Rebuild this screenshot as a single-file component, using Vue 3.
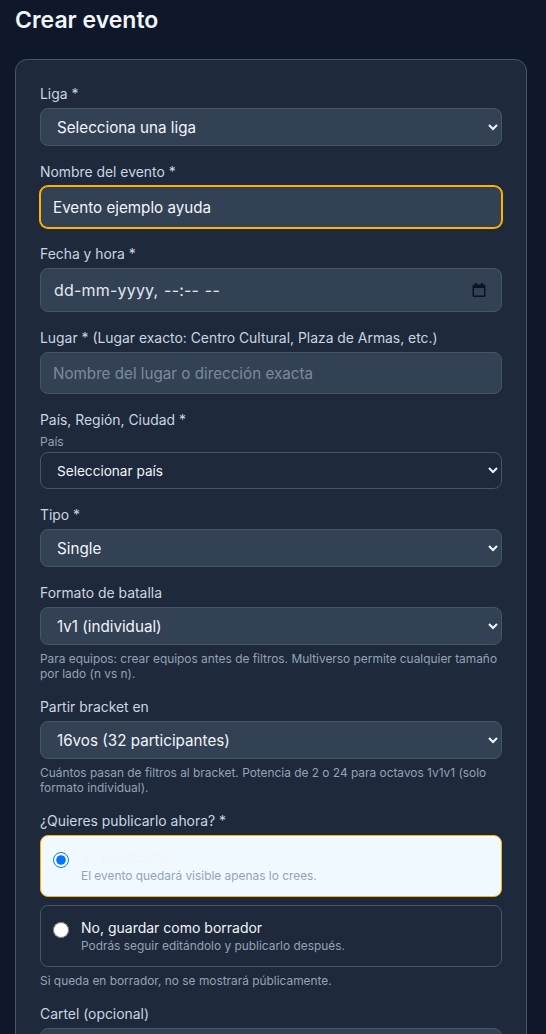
<template>
  <div class="page">
    <h1 class="page-title">Crear evento</h1>
    <form class="event-form" @submit.prevent>
      <div class="form-group">
        <label class="form-label">Liga *</label>
        <select class="form-select">
          <option>Selecciona una liga</option>
        </select>
      </div>

      <div class="form-group">
        <label class="form-label">Nombre del evento *</label>
        <input class="form-input focused" type="text" value="Evento ejemplo ayuda" />
      </div>

      <div class="form-group">
        <label class="form-label">Fecha y hora *</label>
        <div class="date-field">
          <input class="date-text" type="text" value="dd-mm-yyyy, --:-- --" />
          <svg class="date-icon" width="16" height="16" viewBox="0 0 16 16">
            <path d="M4 1h2v1.5h4V1h2v1.5h1.2c.7 0 1.3.6 1.3 1.3v9.9c0 .7-.6 1.3-1.3 1.3H2.8c-.7 0-1.3-.6-1.3-1.3V3.8c0-.7.6-1.3 1.3-1.3H4V1zm-1 5v7.5h10V6H3z" fill="#0b1220" />
          </svg>
        </div>
      </div>

      <div class="form-group">
        <label class="form-label">Lugar * (Lugar exacto: Centro Cultural, Plaza de Armas, etc.)</label>
        <input class="form-input" type="text" placeholder="Nombre del lugar o dirección exacta" />
      </div>

      <div class="form-group">
        <label class="form-label">País, Región, Ciudad *</label>
        <label class="sub-label">País</label>
        <select class="form-select small-select">
          <option>Seleccionar país</option>
        </select>
      </div>

      <div class="form-group">
        <label class="form-label">Tipo *</label>
        <select class="form-select">
          <option>Single</option>
        </select>
      </div>

      <div class="form-group">
        <label class="form-label">Formato de batalla</label>
        <select class="form-select">
          <option>1v1 (individual)</option>
        </select>
        <p class="form-help">Para equipos: crear equipos antes de filtros. Multiverso permite cualquier tamaño por lado (n vs n).</p>
      </div>

      <div class="form-group">
        <label class="form-label">Partir bracket en</label>
        <select class="form-select">
          <option>16vos (32 participantes)</option>
        </select>
        <p class="form-help">Cuántos pasan de filtros al bracket. Potencia de 2 o 24 para octavos 1v1v1 (solo formato individual).</p>
      </div>

      <div class="form-group">
        <label class="form-label">¿Quieres publicarlo ahora? *</label>
        <div class="publish-options">
          <label v-for="opt in publishOptions" :key="opt.value" class="publish-option" :class="{ active: publish === opt.value }">
            <input v-model="publish" class="publish-radio" type="radio" name="publish" :value="opt.value" />
            <span class="publish-text">
              <span class="publish-title">{{ opt.title }}</span>
              <span class="publish-desc">{{ opt.desc }}</span>
            </span>
          </label>
        </div>
        <p class="form-help">Si queda en borrador, no se mostrará públicamente.</p>
      </div>

      <div class="form-group">
        <label class="form-label">Cartel (opcional)</label>
        <input class="form-input" type="text" />
      </div>
    </form>
  </div>
</template>

<script setup>
import { ref } from 'vue'

const publish = ref('yes')

const publishOptions = [
  { value: 'yes', title: 'Sí, publicarlo', desc: 'El evento quedará visible apenas lo crees.' },
  { value: 'no', title: 'No, guardar como borrador', desc: 'Podrás seguir editándolo y publicarlo después.' }
]
</script>

<style scoped>
.page {
  height: 1034px;
  overflow: hidden;
  padding: 0 19px 0 15px;
  box-sizing: border-box;
  background: #0f172a;
  font-family: Inter, "Liberation Sans", sans-serif;
}

.page-title {
  margin: 0 0 24px;
  padding-top: 6px;
  color: #f1f5f9;
  font-size: 23px;
  line-height: 29px;
  font-weight: 600;
}

.event-form {
  padding: 24px;
  background: #1e293b;
  border: 1px solid #475569;
  border-radius: 12px;
}

.form-group {
  margin-bottom: 16px;
}

.form-label {
  display: block;
  margin-bottom: 3px;
  color: #cbd5e1;
  font-size: 13.9px;
  line-height: 21px;
  font-weight: 400;
}

.sub-label {
  display: block;
  margin: 0 0 3px;
  color: #94a3b8;
  font-size: 12px;
  line-height: 15px;
}

.form-select,
.form-input,
.date-field {
  display: block;
  width: 100%;
  box-sizing: border-box;
  background-color: #334155;
  border: 1px solid #475569;
  border-radius: 8px;
  color: #f1f5f9;
  font-family: inherit;
  font-size: 15.2px;
  outline: none;
}

.form-select {
  height: 38px;
  padding: 0 12px;
}

.small-select {
  height: 37px;
  background-color: #1e293b;
  font-size: 13.6px;
}

.form-input {
  height: 42px;
  padding: 0 12px;
}

.form-input::placeholder {
  color: #7c8a9e;
}

.focused {
  border-color: #ffb300;
  box-shadow: 0 0 0 1px #ffb300;
}

.date-field {
  display: flex;
  align-items: center;
  height: 44px;
  padding: 0 14px 0 13px;
}

.date-text {
  flex: 1;
  min-width: 0;
  padding: 0;
  border: none;
  outline: none;
  background: transparent;
  color: #e2e8f0;
  font: inherit;
  font-size: 16px;
  letter-spacing: 0.2px;
  word-spacing: 1px;
}

.date-icon {
  flex-shrink: 0;
}

.form-help {
  margin: 6px 0 0;
  color: #94a3b8;
  font-size: 11.9px;
  line-height: 15px;
}

.publish-options {
  display: flex;
  flex-direction: column;
  gap: 8px;
}

.publish-option {
  display: flex;
  align-items: flex-start;
  gap: 12px;
  height: 62px;
  padding: 12px;
  box-sizing: border-box;
  border: 1px solid #475569;
  border-radius: 8px;
}

.publish-option.active {
  background: #f0f9ff;
  border-color: #ffb300;
}

.publish-radio {
  width: 16px;
  height: 16px;
  margin: 4px 0 0;
  flex-shrink: 0;
}

.publish-text {
  display: flex;
  flex-direction: column;
}

.publish-title {
  color: #f1f5f9;
  font-size: 14px;
  line-height: 20px;
  font-weight: 400;
}

.publish-desc {
  color: #94a3b8;
  font-size: 11.9px;
  line-height: 16px;
}
</style>

<style>
body {
  background: #0f172a;
}
</style>
